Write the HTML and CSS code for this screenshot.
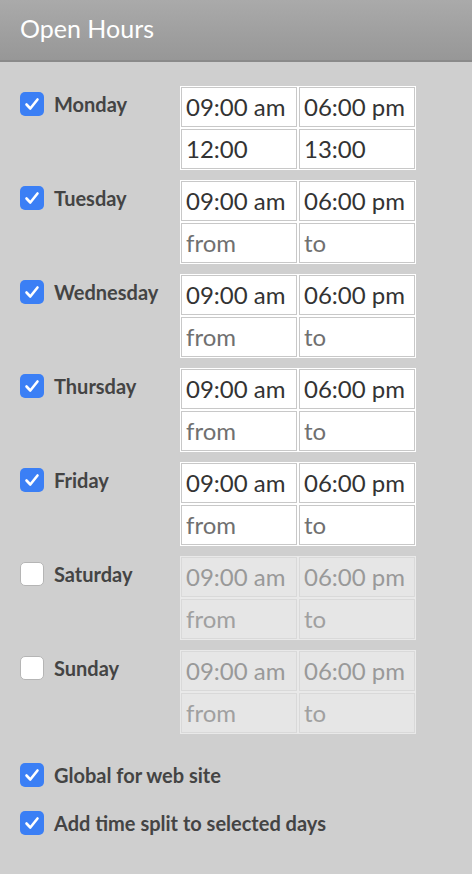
FILE: index.html
```html
<!DOCTYPE html>
<html lang="en">
<head>
    <meta charset="UTF-8">
    <meta name="viewport" content="width=device-width, initial-scale=1.0">
    <title>Open Hours</title>
    <link rel="stylesheet" href="styles.css">
</head>
<body>
    <div class="panel">
        <div class="panel-header">
            <h2>Open Hours</h2>
        </div>

        <div class="panel-body">
            <div class="day">
                <label class="check">
                    <span class="box on"><svg viewBox="0 0 24 24"><path d="M6.5 12.5l3.8 4 7.2-9"/></svg></span>
                    Monday
                </label>
                <div class="times">
                    <input type="text" value="09:00 am">
                    <input type="text" value="06:00 pm">
                    <input type="text" value="12:00" placeholder="from">
                    <input type="text" value="13:00" placeholder="to">
                </div>
            </div>

            <div class="day">
                <label class="check">
                    <span class="box on"><svg viewBox="0 0 24 24"><path d="M6.5 12.5l3.8 4 7.2-9"/></svg></span>
                    Tuesday
                </label>
                <div class="times">
                    <input type="text" value="09:00 am">
                    <input type="text" value="06:00 pm">
                    <input type="text" placeholder="from">
                    <input type="text" placeholder="to">
                </div>
            </div>

            <div class="day">
                <label class="check">
                    <span class="box on"><svg viewBox="0 0 24 24"><path d="M6.5 12.5l3.8 4 7.2-9"/></svg></span>
                    Wednesday
                </label>
                <div class="times">
                    <input type="text" value="09:00 am">
                    <input type="text" value="06:00 pm">
                    <input type="text" placeholder="from">
                    <input type="text" placeholder="to">
                </div>
            </div>

            <div class="day">
                <label class="check">
                    <span class="box on"><svg viewBox="0 0 24 24"><path d="M6.5 12.5l3.8 4 7.2-9"/></svg></span>
                    Thursday
                </label>
                <div class="times">
                    <input type="text" value="09:00 am">
                    <input type="text" value="06:00 pm">
                    <input type="text" placeholder="from">
                    <input type="text" placeholder="to">
                </div>
            </div>

            <div class="day">
                <label class="check">
                    <span class="box on"><svg viewBox="0 0 24 24"><path d="M6.5 12.5l3.8 4 7.2-9"/></svg></span>
                    Friday
                </label>
                <div class="times">
                    <input type="text" value="09:00 am">
                    <input type="text" value="06:00 pm">
                    <input type="text" placeholder="from">
                    <input type="text" placeholder="to">
                </div>
            </div>

            <div class="day">
                <label class="check">
                    <span class="box"></span>
                    Saturday
                </label>
                <div class="times disabled">
                    <input type="text" value="09:00 am" disabled>
                    <input type="text" value="06:00 pm" disabled>
                    <input type="text" placeholder="from" disabled>
                    <input type="text" placeholder="to" disabled>
                </div>
            </div>

            <div class="day">
                <label class="check">
                    <span class="box"></span>
                    Sunday
                </label>
                <div class="times disabled">
                    <input type="text" value="09:00 am" disabled>
                    <input type="text" value="06:00 pm" disabled>
                    <input type="text" placeholder="from" disabled>
                    <input type="text" placeholder="to" disabled>
                </div>
            </div>

            <div class="options">
                <label class="check">
                    <span class="box on"><svg viewBox="0 0 24 24"><path d="M6.5 12.5l3.8 4 7.2-9"/></svg></span>
                    Global for web site
                </label>
                <label class="check">
                    <span class="box on"><svg viewBox="0 0 24 24"><path d="M6.5 12.5l3.8 4 7.2-9"/></svg></span>
                    Add time split to selected days
                </label>
            </div>
        </div>
    </div>
</body>
</html>
```

FILE: styles.css
```css
body {
    margin: 0;
    font-family: Lato, "Open Sans", sans-serif;
    background-color: #cfcfcf;
    color: #444;
}

.panel-header {
    height: 60px;
    padding: 0 20px;
    background: linear-gradient(#aaaaaa, #979797);
    border-bottom: 2px solid #8a8a8a;
    display: flex;
    align-items: center;
}

.panel-header h2 {
    margin: 0 0 4px;
    font-size: 25px;
    line-height: 28px;
    font-weight: normal;
    color: white;
}

.panel-body {
    padding: 24px 20px 0;
}

.day {
    display: flex;
    height: 84px;
    margin-bottom: 10px;
}

.day .check {
    width: 160px;
    padding-top: 6px;
    align-self: flex-start;
}

.check {
    display: flex;
    align-items: center;
    gap: 10px;
    font-size: 20px;
    font-weight: bold;
    line-height: 24px;
    color: #444;
}

.box {
    width: 24px;
    height: 24px;
    box-sizing: border-box;
    border-radius: 5px;
    background: white;
    border: 1px solid #b5b5b5;
    flex: none;
}

.box.on {
    background: #3b7ff5;
    border: none;
}

.box svg {
    display: block;
    width: 24px;
    height: 24px;
    fill: none;
    stroke: white;
    stroke-width: 2.6;
    stroke-linecap: round;
    stroke-linejoin: round;
}

.times {
    width: 236px;
    height: 84px;
    box-sizing: border-box;
    padding: 1px;
    background: white;
    display: grid;
    grid-template-columns: 1fr 1fr;
    grid-auto-rows: 40px;
    gap: 2px;
}

.times input {
    width: 100%;
    height: 40px;
    box-sizing: border-box;
    margin: 0;
    padding: 0 4px 2px;
    border: 1px solid #c8c8c8;
    background: white;
    font-family: Lato, "Open Sans", sans-serif;
    font-size: 24px;
    color: #333;
    outline: none;
}

.times input::placeholder {
    color: #707070;
}

.times.disabled {
    background: #e9e9e9;
}

.times.disabled input {
    background: #e6e6e6;
    border-color: #d9d9d9;
    color: #999;
}

.times.disabled input::placeholder {
    color: #a0a0a0;
}

.options {
    margin-top: 29px;
    display: flex;
    flex-direction: column;
    gap: 24px;
}
```
